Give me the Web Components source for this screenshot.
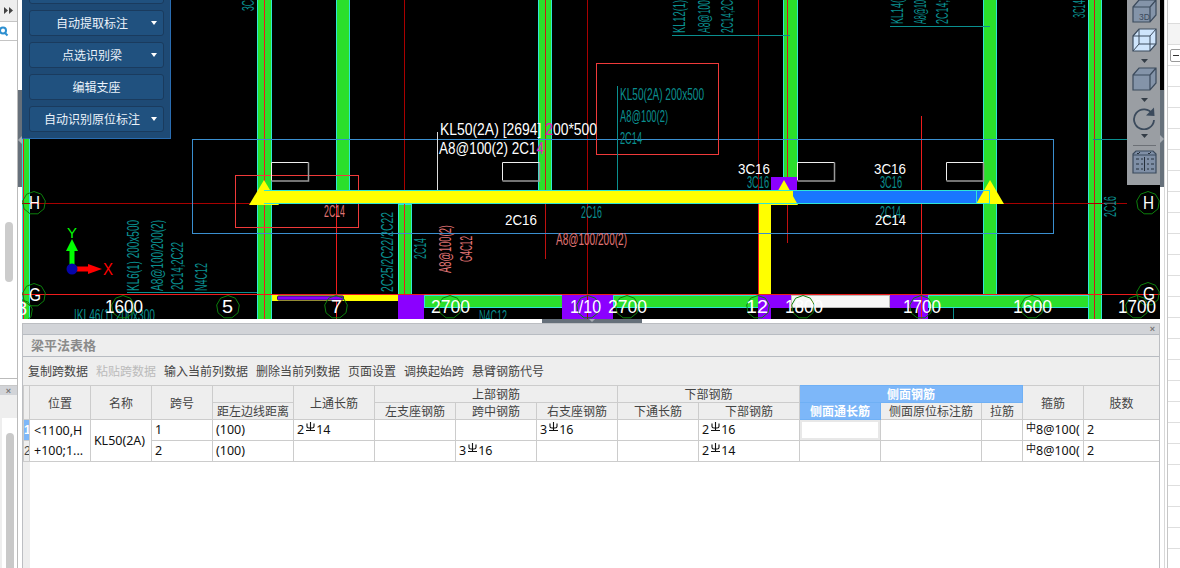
<!DOCTYPE html>
<html lang="zh">
<head>
<meta charset="utf-8">
<title>梁平法表格</title>
<style>
  html, body { margin: 0; height: 100%; background: #fff; overflow: hidden; }
  body { font-family: "Noto Sans CJK SC", "Liberation Sans", sans-serif; font-size: 12px; }
</style>
</head>
<body>
<gl-app>
  <left-dock slot="left"></left-dock>
  <div slot="center" style="position:relative;height:319px;">
    <cad-canvas></cad-canvas>
    <float-panel>
      <float-btn></float-btn>
      <float-btn menu>自动提取标注</float-btn>
      <float-btn menu>点选识别梁</float-btn>
      <float-btn>编辑支座</float-btn>
      <float-btn menu>自动识别原位标注</float-btn>
    </float-panel>
    <view-toolbar></view-toolbar>
  </div>
  <beam-panel slot="bottom" title-text="梁平法表格">
    <tool-item>复制跨数据</tool-item>
    <tool-item disabled>粘贴跨数据</tool-item>
    <tool-item>输入当前列数据</tool-item>
    <tool-item>删除当前列数据</tool-item>
    <tool-item>页面设置</tool-item>
    <tool-item>调换起始跨</tool-item>
    <tool-item>悬臂钢筋代号</tool-item>
    <beam-table slot="table"></beam-table>
  </beam-panel>
  <right-dock slot="right"></right-dock>
</gl-app>

<script>
class GlApp extends HTMLElement {
  constructor() {
    super();
    this.attachShadow({ mode: 'open' });
  }
  connectedCallback() {
    this.shadowRoot.innerHTML = `
      <style>
        :host { display: grid; grid-template-columns: 22px 1138px 20px; height: 568px; width: 1180px; overflow: hidden; }
        .center { display: flex; flex-direction: column; min-width: 0; height: 568px; }
        .gap { height: 4px; background: #fff; display: flex; justify-content: center; }
        .grip { width: 100px; height: 4px; background: #66707a; margin-left: 2px; position: relative; }
        .grip::after { content: ""; position: absolute; left: 47px; top: 0; border: 3px solid transparent; border-top: 3px solid #a8adb3; border-bottom-width: 0; }
        .bottom { flex: 1; min-height: 0; display: flex; }
      </style>
      <slot name="left"></slot>
      <div class="center">
        <slot name="center"></slot>
        <div class="gap"><div class="grip"></div></div>
        <div class="bottom"><slot name="bottom"></slot></div>
      </div>
      <slot name="right"></slot>
    `;
  }
}

class LeftDock extends HTMLElement {
  constructor() {
    super();
    this.attachShadow({ mode: 'open' });
  }
  connectedCallback() {
    this.shadowRoot.innerHTML = `
      <style>
        :host { display: flex; width: 22px; height: 568px; background: #fff; }
        .col { width: 17px; border-right: 1px solid #bbb; display: flex; flex-direction: column; height: 568px; overflow: hidden; }
        .tabs { height: 21px; background: #eee; border-bottom: 1px solid #c4c4c4; display: flex; align-items: center; justify-content: center; flex: none; }
        .search { height: 18px; border-bottom: 1px solid #c4c4c4; flex: none; overflow: hidden; position: relative; }
        .search svg { display: block; margin: 4px 0 0 -1px; }
        .tree { flex: none; height: 338px; position: relative; border-bottom: 1px solid #bbb; display: flex; justify-content: center; padding-top: 181px; box-sizing: border-box; }
        .thumb { width: 8px; height: 60px; border-radius: 4px; background: #ccc; }
        .spacer { height: 6px; flex: none; background: #fff; }
        .bar { height: 9px; flex: none; background: #d2d4d8; display: flex; justify-content: center; align-items: center; color: #777; font: bold 9px "Liberation Sans", sans-serif; border-top: 1px solid #c8c8c8; }
        .strip { height: 23px; flex: none; background: #eee; }
        .list { flex: 1; display: flex; justify-content: center; padding-top: 15px; background: linear-gradient(90deg, #eee 2px, #fff 2px); }
        .thumb2 { width: 8px; height: 200px; border-radius: 4px; background: #c9c9c9; margin-left: 3px; }
        .rail { width: 4px; height: 568px; display: flex; flex-direction: column; }
        .rail i { display: block; margin-top: 90px; height: 97px; background: #66707a; position: relative; }
        .rail i::after { content: ""; position: absolute; left: 0; top: 46px; border: 4px solid transparent; border-left-width: 0; border-right: 4px solid #a8adb3; }
      </style>
      <div class="col">
        <div class="tabs">
          <svg width="9" height="7" viewBox="0 0 9 7"><path d="M0 0l4 3.5L0 7zM5 0l4 3.5L5 7z" fill="#444"/></svg>
        </div>
        <div class="search">
          <svg width="10" height="11" viewBox="0 0 10 11"><circle cx="4" cy="4.5" r="3" fill="none" stroke="#2d8fd0" stroke-width="2"/><path d="M6 7l2.5 2.5" stroke="#2d8fd0" stroke-width="2"/></svg>
        </div>
        <div class="tree"><div class="thumb"></div></div>
        <div class="spacer"></div>
        <div class="bar">×</div>
        <div class="strip"></div>
        <div class="list"><div class="thumb2"></div></div>
      </div>
      <div class="rail"><i></i></div>
    `;
  }
}

class RightDock extends HTMLElement {
  constructor() {
    super();
    this.attachShadow({ mode: 'open' });
  }
  connectedCallback() {
    const lines = Array.from({ length: 25 }, (_, i) => `<i style="top:${65 + i * 21}px"></i>`).join('');
    this.shadowRoot.innerHTML = `
      <style>
        :host { display: flex; width: 20px; height: 568px; background: #fff; overflow: hidden; }
        .rail { width: 4px; flex: none; height: 568px; }
        .rail b { display: block; height: 90px; background: #000; }
        .rail i { display: block; height: 97px; background: #66707a; position: relative; }
        .rail i::after { content: ""; position: absolute; left: 0; top: 45px; border: 4px solid transparent; border-right-width: 0; border-left: 4px solid #a8adb3; }
        .edge { width: 4px; flex: none; border-right: 1px solid #c6c6c6; border-left: 1px solid #d8d8d8; box-sizing: border-box; }
        .sheet { flex: 1; position: relative; }
        .head { height: 20px; margin-top: 23px; background: #f4f4f4; border-top: 1px solid #dcdcdc; border-bottom: 1px solid #dcdcdc; }
        .sheet i { position: absolute; left: 0; right: 0; height: 1px; background: #dedede; }
        .box { position: absolute; left: 2px; top: 49px; width: 14px; height: 11px; border: 1px solid #999; border-radius: 2px; background: #fff; z-index: 1; }
        .box::after { content: ""; position: absolute; left: 2px; top: 5px; width: 6px; height: 1px; background: #333; }
      </style>
      <div class="rail"><b></b><i></i></div>
      <div class="edge"></div>
      <div class="sheet">
        <div class="head"></div>
        <div class="box"></div>
        ${lines}
      </div>
    `;
  }
}

// text in global page coordinates, the svg viewBox carries the 22px offset
function txt(s, x, base, w, size, fill) {
  return `<text x="${x}" y="${base}" font-size="${size}" fill="${fill}" textLength="${w}" lengthAdjust="spacingAndGlyphs">${s}</text>`;
}
function vtxt(s, cx, top, bottom, size, fill) {
  const b = cx + size * 0.36;
  return `<text x="${b}" y="${bottom}" font-size="${size}" fill="${fill}" textLength="${bottom - top}" lengthAdjust="spacingAndGlyphs" transform="rotate(-90 ${b} ${bottom})">${s}</text>`;
}
function col(x, y, w, h) {
  return `<rect x="${x + 0.5}" y="${y + 0.5}" width="${w}" height="${h}" fill="#2bdf2b" stroke="#2ee6d6"/>`;
}
function bubble(cx, cy) {
  const pts = [];
  for (let i = 0; i < 9; i++) {
    const a = -Math.PI / 2 + i * 2 * Math.PI / 9;
    pts.push((cx + 11.5 * Math.cos(a)).toFixed(1) + ',' + (cy + 11.5 * Math.sin(a)).toFixed(1));
  }
  return `<polygon points="${pts.join(' ')}" fill="none" stroke="#0c800c"/>`;
}
function tri(cx, top, bottom, half) {
  return `<polygon points="${cx},${top} ${cx - half},${bottom} ${cx + half},${bottom}" fill="#ff0"/>`;
}

class CadCanvas extends HTMLElement {
  constructor() {
    super();
    this.attachShadow({ mode: 'open' });
  }
  connectedCallback() {
    const teal = '#0a8f8f', sal = '#e07575', wh = '#fff', red = '#ee1c1c', dark = '#a80000';
    const T = 16.5;
    const v = (x, y1, y2, c) => `<line x1="${x}" x2="${x}" y1="${y1}" y2="${y2}" stroke="${c}"/>`;
    const h = (y, x1, x2, c) => `<line x1="${x1}" x2="${x2}" y1="${y}" y2="${y}" stroke="${c}"/>`;
    const box = (x, y, w, hh, c) => `<rect x="${x}" y="${y}" width="${w}" height="${hh}" fill="none" stroke="${c}"/>`;
    const gbox = (x) => `<path d="M${x} 180.5V162.5H${x + 37}" fill="none" stroke="#eee"/><path d="M${x} 181H${x + 37}V162.5" fill="none" stroke="#999" stroke-width="1.5"/>`;
    const rect = (x, y, w, hh, c) => `<rect x="${x}" y="${y}" width="${w}" height="${hh}" fill="${c}"/>`;

    const svg = `
      ${v(404.5, 0, 319, dark)}${v(587.5, 0, 319, dark)}${v(758.5, 0, 190, dark)}
      ${col(22, -2, 7, 322)}${col(257, -2, 14, 322)}${col(336, -2, 13, 192)}
      ${col(538, -2, 13, 192)}${col(398, 204, 13, 91)}${col(783, -2, 14, 180)}
      ${col(983, -2, 13, 297)}${col(1088, -2, 13, 322)}
      ${v(23.5, 0, 319, red)}${v(264.5, 0, 319, red)}${v(545.5, 0, 190, '#d01818')}${v(404.5, 204, 295, red)}
      ${v(787.5, 0, 178, '#d01818')}${v(1094.5, 0, 319, '#d01818')}
      ${v(921.5, 116, 319, red)}${v(336.5, 204, 319, red)}${v(545.5, 204, 259, '#c01010')}${v(787.5, 204, 243, '#c01010')}
      ${rect(758, 204, 13, 91, '#ff0')}${v(758.5, 204, 295, red)}

      ${h(203.5, 22, 1127, dark)}${h(294.5, 22, 1160, red)}
      ${box(192.5, 139.5, 861, 94, '#3a8fd0')}
      ${box(235.5, 175.5, 123, 52, '#f03a3a')}
      ${box(596.5, 63.5, 122, 91, '#f03a3a')}
      ${gbox(271.5)}${gbox(502.5)}${gbox(797.5)}${gbox(946.5)}
      ${v(437.5, 132, 190, '#ddd')}
      ${v(617.5, 86, 190, teal)}
      ${h(35.5, 672, 790, teal)}${h(26.5, 890, 990, teal)}${h(139.5, 1093, 1127, teal)}${h(292.5, 127, 257, teal)}
      ${v(953.5, 301, 319, teal)}

      ${rect(771, 177, 26, 13, '#8b00ff')}
      ${rect(264, 190, 529, 14, '#ff0')}
      ${rect(793, 190, 197, 14, '#1976ff')}
      ${tri(264, 180, 205, 15)}
      ${tri(784, 180, 205, 14)}${tri(990, 180, 204, 14)}
      <path d="M264 190.5H990M264 203.5H990" stroke="#2ee6d6" fill="none"/>
      <rect x="976.5" y="190.5" width="13" height="13" fill="none" stroke="#2ee6d6"/>

      ${rect(272, 295, 127, 6, '#ff0')}
      <rect x="277.5" y="296" width="66" height="4" rx="1" fill="#8b00ff" stroke="#2a1a6a"/>
      ${rect(398, 295, 26, 24, '#8b00ff')}
      <rect x="424.5" y="295.5" width="138" height="12" fill="#2bdf2b" stroke="#2ee6d6"/>
      ${rect(562, 295, 51, 24, '#8b00ff')}
      <rect x="613.5" y="295.5" width="145" height="12" fill="#2bdf2b" stroke="#2ee6d6"/>
      ${rect(758, 295, 13, 24, '#8b00ff')}${rect(771, 295, 21, 13, '#8b00ff')}
      <rect x="791.5" y="295.5" width="98" height="12" fill="#f6f6f6" stroke="#bbb"/>
      ${rect(890, 295, 38, 13, '#8b00ff')}${rect(918, 308, 10, 11, '#8b00ff')}
      <rect x="928.5" y="295.5" width="160" height="12" fill="#2bdf2b" stroke="#2ee6d6"/>
      ${h(294.5, 22, 1160, red)}${v(921.5, 295, 319, red)}${v(587.5, 295, 319, dark)}

      ${vtxt('3C', 248, 0, 11, T, teal)}
      ${vtxt('KL12(1)', 679, 0, 33, T, teal)}
      ${vtxt('A8@100', 704, 0, 33, T, teal)}
      ${vtxt('2C14;2C', 727, 0, 33, T, teal)}
      ${vtxt('KL14(', 897, 0, 24, T, teal)}
      ${vtxt('A8@10', 920, 0, 24, T, teal)}
      ${vtxt('2C14;', 942, 0, 24, T, teal)}
      ${vtxt('3C14', 1079, 0, 18, T, teal)}

      ${vtxt('KL6(1) 200x500', 133, 220, 291, T, teal)}
      ${vtxt('A8@100/200(2)', 157, 220, 291, T, teal)}
      ${vtxt('2C14;2C22', 177, 242, 290, T, teal)}
      ${vtxt('N4C12', 201, 263, 291, T, teal)}
      ${vtxt('2C25/2C22/2C22', 387, 212, 292, T, teal)}
      ${vtxt('2C14', 420, 238, 259, T, teal)}
      ${vtxt('A8@100(2)', 445, 225, 273, T, sal)}
      ${vtxt('G4C12', 466, 236, 262, T, sal)}
      ${vtxt('2C16', 1110, 196, 217, T, teal)}

      ${txt('KL50(2A) 200x500', 620, 100, 84, T, teal)}
      ${txt('A8@100(2)', 620, 122, 48, T, teal)}
      ${txt('2C14', 620, 144, 22, T, teal)}
      <text x="440" y="135" font-size="16" fill="#fff" textLength="157" lengthAdjust="spacingAndGlyphs">KL50(2A) [2694] <tspan fill="#e020c0">2</tspan>00*500</text>
      <text x="439" y="154" font-size="16" fill="#fff" textLength="105" lengthAdjust="spacingAndGlyphs">A8@100(2) 2C1<tspan fill="#e020c0">4</tspan></text>
      ${txt('3C16', 738, 174, 32, 15, wh)}${txt('3C16', 747, 188, 22, T, teal)}
      ${txt('3C16', 874, 174, 32, 15, wh)}${txt('3C16', 880, 188, 22, T, teal)}
      ${txt('2C16', 505, 225, 32, 15, wh)}${txt('2C16', 581, 218, 21, T, teal)}
      ${txt('A8@100/200(2)', 556, 245, 71, T, sal)}
      ${txt('2C14', 324, 217, 21, T, sal)}
      ${txt('2C14', 880, 218, 21, T, teal)}${txt('2C14', 875, 225, 31, 15, wh)}
      ${txt('N4C12', 479, 322, 28, T, teal)}
      ${txt('|KL46(1) 200x300', 74, 321, 81, T, teal)}

      ${bubble(34, 203)}${bubble(34, 295)}${bubble(21, 311)}${bubble(123, 307)}${bubble(228, 307)}${bubble(336, 307)}
      ${bubble(450, 307)}${bubble(588, 307)}${bubble(627, 307)}${bubble(758, 307)}${bubble(803, 307)}
      ${bubble(921, 307)}${bubble(1032, 307)}${bubble(1137, 307)}${bubble(1148, 203)}${bubble(1148, 294)}
      ${txt('H', 29, 209, 11, 18, wh)}${txt('G', 29, 301, 12, 18, wh)}${txt('8', 17, 315, 10, 18, wh)}
      ${txt('H', 1143, 209, 11, 18, wh)}${txt('G', 1143, 300, 12, 18, wh)}
      ${txt('1600', 105, 313, 38, 18, wh)}${txt('5', 222, 313, 11, 18, wh)}${txt('7', 331, 313, 11, 18, wh)}
      ${txt('2700', 431, 313, 39, 18, wh)}${txt('1/10', 570, 313, 31, 18, wh)}${txt('2700', 608, 313, 39, 18, wh)}
      ${txt('12', 746, 313, 22, 18, wh)}${txt('1800', 785, 313, 38, 18, wh)}${txt('1700', 903, 313, 38, 18, wh)}
      ${txt('1600', 1013, 313, 39, 18, wh)}${txt('1700', 1118, 313, 38, 18, wh)}

      <path d="M72 269V250" stroke="#0f0" stroke-width="5"/>
      <polygon points="72,239 66,251 78,251" fill="#0f0"/>
      <path d="M72 269H90" stroke="#f00" stroke-width="5"/>
      <polygon points="102,269 88,264 88,274" fill="#f00"/>
      <circle cx="72" cy="269" r="5.5" fill="#0505a8"/>
      ${txt('Y', 67, 238, 10, 15, '#0f0')}${txt('X', 103, 275, 10, 16, '#f00')}
    `;
    this.shadowRoot.innerHTML = `
      <style>
        :host { display: block; width: 1138px; height: 319px; background: #000; overflow: hidden; }
        svg { display: block; font-family: "Liberation Sans", sans-serif; }
      </style>
      <svg width="1138" height="319" viewBox="22 0 1138 319">${svg}</svg>
    `;
  }
}

class FloatPanel extends HTMLElement {
  constructor() {
    super();
    this.attachShadow({ mode: 'open' });
  }
  connectedCallback() {
    this.shadowRoot.innerHTML = `
      <style>
        :host { position: absolute; left: 0; top: 0; width: 149px; height: 139px; box-sizing: border-box; background: #1e4a75; border: solid #2a6cb0; border-width: 0 1px 1px 0; display: flex; flex-direction: column; justify-content: flex-end; gap: 6px; padding: 0 6px 6px 7px; overflow: hidden; }
      </style>
      <slot></slot>
    `;
  }
}

class FloatBtn extends HTMLElement {
  constructor() {
    super();
    this.attachShadow({ mode: 'open' });
  }
  connectedCallback() {
    this.shadowRoot.innerHTML = `
      <style>
        :host { display: flex; flex: none; height: 26px; box-sizing: border-box; align-items: center; justify-content: center; padding-bottom: 1px; background: #20517f; border: 1px solid #1a3b5e; border-radius: 3px; color: #eaf2fa; font-size: 12px; position: relative; }
        :host([menu]) { padding-right: 9px; }
        :host([menu])::after { content: ""; position: absolute; right: 6px; top: 10px; border: 3.5px solid transparent; border-top: 4px solid #fff; border-bottom-width: 0; }
      </style>
      <slot></slot>
    `;
  }
}

class ViewToolbar extends HTMLElement {
  constructor() {
    super();
    this.attachShadow({ mode: 'open' });
  }
  connectedCallback() {
    const s = '#3b4a5c';
    const drop = `<svg class="drop" width="7" height="4" viewBox="0 0 7 4"><path d="M0 0h7L3.5 4z" fill="#333c46"/></svg>`;
    this.shadowRoot.innerHTML = `
      <style>
        :host { position: absolute; right: 0; top: 0; width: 33px; height: 185px; box-sizing: border-box; background: #9a9ea3; display: flex; flex-direction: column; align-items: center; padding: 0 0 0 1px; overflow: hidden; font-family: "Liberation Sans", sans-serif; }
        svg { display: block; flex: none; }
        .top { margin-top: -1px; }
        .drop { margin: 7px 0 4px; }
        .rule { width: 23px; height: 1px; background: #6c7076; margin: 3px 0 4px; flex: none; }
      </style>
      <svg class="top" width="25" height="24" viewBox="0 0 25 24"><path d="M1 8L7 1H24V16L18 23H1zM1 8H18V23M18 8L24 1" fill="#8494a9" stroke="${s}" stroke-width="1.2"/><text x="7" y="21" font-size="8.5" fill="${s}">3D</text></svg>
      <svg style="margin-top:5px" width="25" height="24" viewBox="0 0 25 24"><path d="M1 8L7 1H24V16L18 23H1z" fill="#cfe5fc" stroke="${s}" stroke-width="1.2"/><path d="M1 8H18V23M18 8L24 1M7 1V16H24M7 16L1 23" fill="none" stroke="${s}"/></svg>
      ${drop}
      <svg width="25" height="24" viewBox="0 0 25 24"><path d="M1 8L7 1H24V16L18 23H1zM1 8H18V23M18 8L24 1" fill="#8494a9" stroke="${s}" stroke-width="1.2"/></svg>
      ${drop}
      <svg style="margin-top:1px" width="24" height="23" viewBox="0 0 24 23"><path d="M20.5 7A10 10 0 1 0 22 13" fill="none" stroke="${s}" stroke-width="1.8"/><path d="M14 8.5L22.5 9 22 .5z" fill="${s}"/></svg>
      <svg class="drop" style="margin-top:4px" width="7" height="4" viewBox="0 0 7 4"><path d="M0 0h7L3.5 4z" fill="#333c46"/></svg>
      <div class="rule"></div>
      <svg width="25" height="24" viewBox="0 0 25 24"><path d="M1 4L4 1H21L24 4V23H1zM1 5H24" fill="#7f8fa6" stroke="${s}" stroke-width="1.2"/><path d="M5 3l1 1 2-2M16 3l1 1 2-2M12.5 7V21M4 9h3M4 14h3M4 19h3M9 9h2M9 14h2M9 19h2M15 9h2M15 14h2M15 19h2M19 9h3M19 14h3M19 19h3" fill="none" stroke="#26303c"/></svg>
    `;
  }
}

class BeamPanel extends HTMLElement {
  constructor() {
    super();
    this.attachShadow({ mode: 'open' });
  }
  connectedCallback() {
    this.shadowRoot.innerHTML = `
      <style>
        :host { display: flex; flex-direction: column; width: 1138px; height: 245px; box-sizing: border-box; border: solid #bcbec2; border-width: 1px 1px 0 1px; background: #fff; overflow: hidden; }
        .bar { height: 10px; flex: none; background: #d2d4d8; border-bottom: 1px solid #b8bcc2; display: flex; justify-content: flex-end; align-items: center; padding-right: 4px; color: #777; font: bold 9px "Liberation Sans", sans-serif; }
        .title { height: 19px; flex: none; background: #eee; border-bottom: 1px solid #b8bcc2; display: flex; align-items: center; padding: 0 0 2px 8px; color: #8a8a8a; font-weight: bold; font-size: 13px; }
        .tools { height: 26px; flex: none; background: #eee; display: flex; align-items: center; gap: 8px; padding: 0 0 2px 5px; }
        .table { flex: 1; min-height: 0; }
      </style>
      <div class="bar">×</div>
      <div class="title">${this.getAttribute('title-text')}</div>
      <div class="tools"><slot></slot></div>
      <div class="table"><slot name="table"></slot></div>
    `;
  }
}

class ToolItem extends HTMLElement {
  constructor() {
    super();
    this.attachShadow({ mode: 'open' });
  }
  connectedCallback() {
    this.shadowRoot.innerHTML = `
      <style>
        :host { display: block; color: #444; font-size: 12px; white-space: nowrap; }
        :host([disabled]) { color: #bbb; }
      </style>
      <slot></slot>
    `;
  }
}

class RebarMark extends HTMLElement {
  constructor() {
    super();
    this.attachShadow({ mode: 'open' });
  }
  connectedCallback() {
    this.shadowRoot.innerHTML = `
      <style>
        :host { display: inline-block; width: 9px; height: 9px; vertical-align: 3px; margin: 0 1px 0 2px; line-height: 0; }
        svg { display: block; }
      </style>
      <svg width="9" height="9" viewBox="0 0 9 9"><path d="M4.5 0V8M1 1.5V4.5Q1 6 3 6H6Q8 6 8 4.5V1.5M0 8.5H9" fill="none" stroke="#111" stroke-width="1.1"/></svg>
    `;
  }
}

class BeamTable extends HTMLElement {
  constructor() {
    super();
    this.attachShadow({ mode: 'open' });
  }
  connectedCallback() {
    const widths = [6, 61, 61, 61, 81, 81, 81, 81, 81, 81, 101, 81, 101, 41, 61, 76];
    const C = '<rebar-mark></rebar-mark>';
    this.shadowRoot.innerHTML = `
      <style>
        :host { display: block; height: 100%; background: linear-gradient(90deg, #eee 7px, #fff 7px); }
        table { border-collapse: collapse; table-layout: fixed; width: 1136px; font-size: 12px; color: #111; }
        th, td { border: 1px solid #ccc; padding: 0 3px; overflow: hidden; white-space: nowrap; }
        th { background: #eee; color: #444; font-weight: normal; text-align: center; height: 15px; padding-bottom: 1px; line-height: 13px; }
        td { height: 20px; line-height: 16px; font-family: "Noto Sans", "Noto Sans CJK SC", sans-serif; font-size: 12.5px; }
        .num { padding: 0; background: #eee; color: #444; font-family: "Liberation Sans", sans-serif; font-size: 12px; text-align: center; }
        .num.on { background: #7db7f9; color: #fff; font-weight: bold; }
        th.on { background: #7db7f9; color: #fff; font-weight: bold; border-color: #6fb0f5; }
        .pos { padding-left: 4px; line-height: 20px; white-space: pre; }
        .name { text-align: center; padding: 0 3px 0 0; }
        .sel { box-shadow: inset 0 0 0 2px #e8e8e8; }
        .a { font-size: 10px; line-height: 0; vertical-align: 3px; font-family: "Noto Sans CJK SC", sans-serif; }
      </style>
      <table>
        <colgroup>${widths.map(w => `<col style="width:${w}px">`).join('')}</colgroup>
        <tr>
          <th class="num" rowspan="2"></th>
          <th rowspan="2">位置</th><th rowspan="2">名称</th><th rowspan="2">跨号</th>
          <th></th>
          <th rowspan="2">上通长筋</th>
          <th colspan="3">上部钢筋</th>
          <th colspan="2">下部钢筋</th>
          <th class="on" colspan="3">侧面钢筋</th>
          <th rowspan="2">箍筋</th><th rowspan="2">肢数</th>
        </tr>
        <tr>
          <th>距左边线距离</th>
          <th>左支座钢筋</th><th>跨中钢筋</th><th>右支座钢筋</th>
          <th>下通长筋</th><th>下部钢筋</th>
          <th class="on">侧面通长筋</th><th>侧面原位标注筋</th><th>拉筋</th>
        </tr>
        <tr>
          <td class="num on">1</td>
          <td class="pos" rowspan="2">&lt;1100,H
+100;1...</td>
          <td class="name" rowspan="2">KL50(2A)</td>
          <td>1</td><td>(100)</td><td>2${C}14</td>
          <td></td><td></td><td>3${C}16</td>
          <td></td><td>2${C}16</td>
          <td class="sel"></td><td></td><td></td>
          <td><span class="a">中</span>8@100(</td><td>2</td>
        </tr>
        <tr>
          <td class="num">2</td>
          <td>2</td><td>(100)</td><td></td>
          <td></td><td>3${C}16</td><td></td>
          <td></td><td>2${C}14</td>
          <td></td><td></td><td></td>
          <td><span class="a">中</span>8@100(</td><td>2</td>
        </tr>
      </table>
    `;
  }
}

customElements.define('gl-app', GlApp);
customElements.define('left-dock', LeftDock);
customElements.define('right-dock', RightDock);
customElements.define('cad-canvas', CadCanvas);
customElements.define('float-panel', FloatPanel);
customElements.define('float-btn', FloatBtn);
customElements.define('view-toolbar', ViewToolbar);
customElements.define('beam-panel', BeamPanel);
customElements.define('tool-item', ToolItem);
customElements.define('rebar-mark', RebarMark);
customElements.define('beam-table', BeamTable);
</script>
</body>
</html>
